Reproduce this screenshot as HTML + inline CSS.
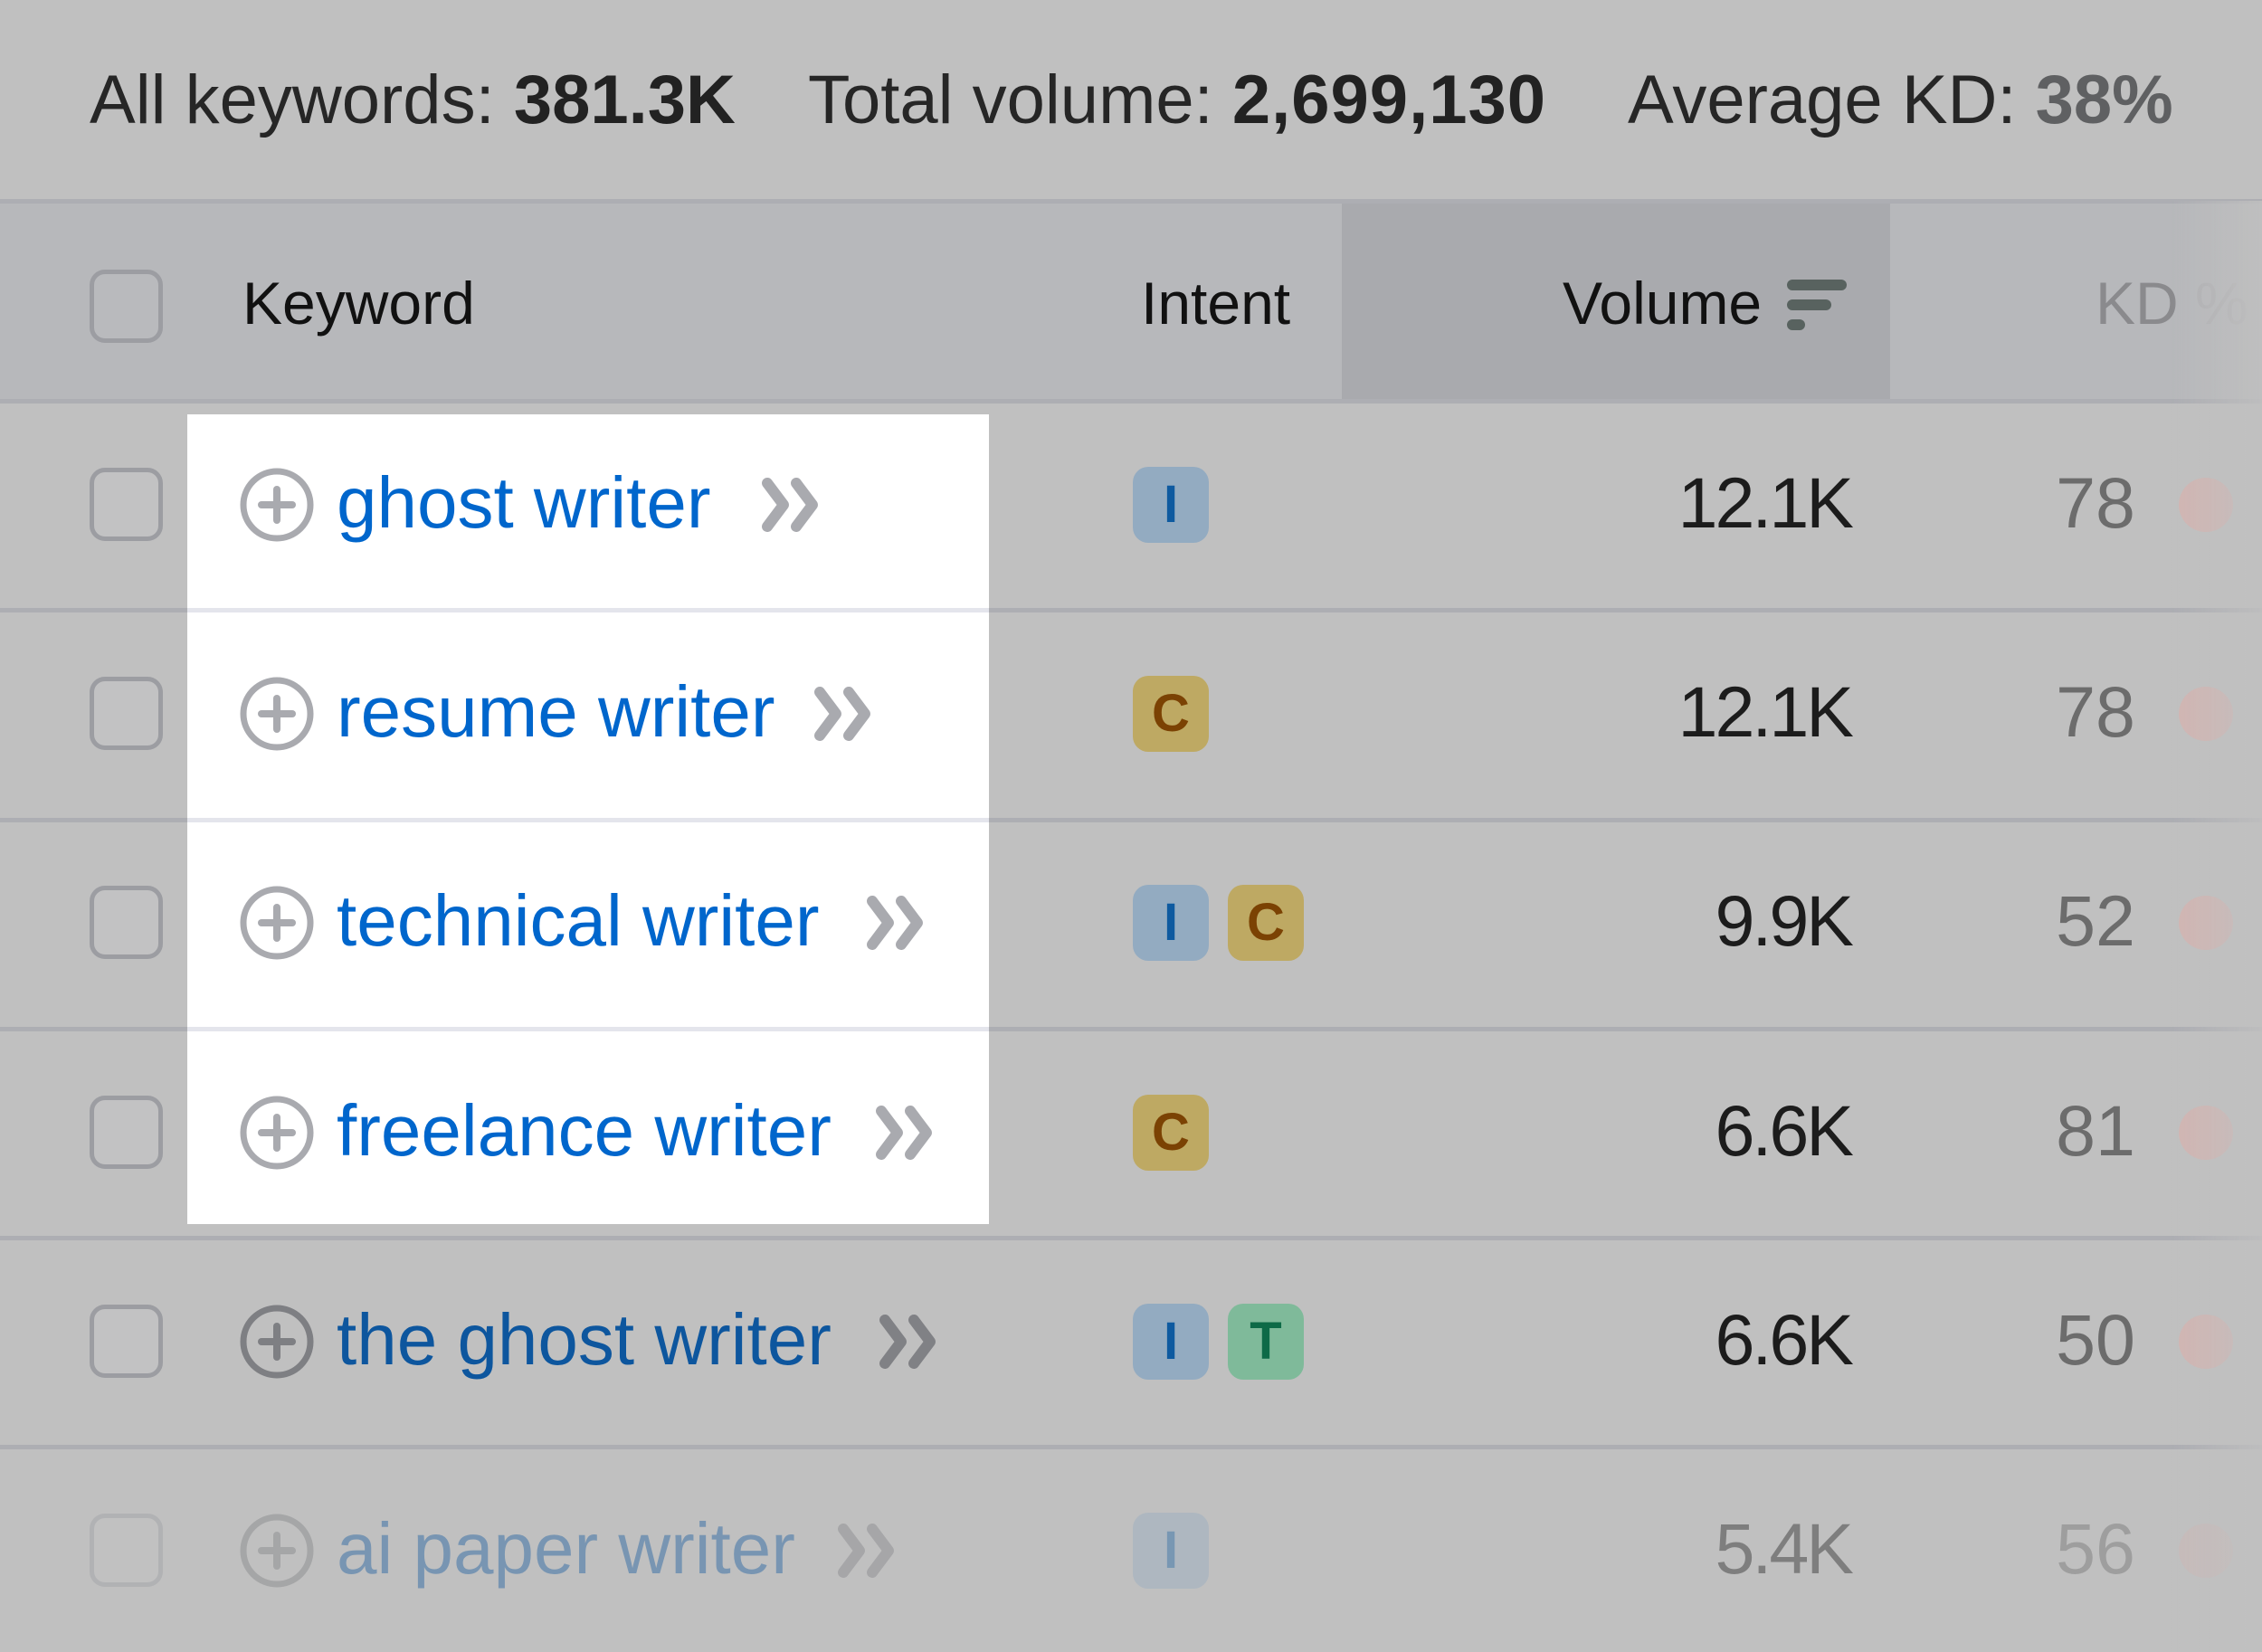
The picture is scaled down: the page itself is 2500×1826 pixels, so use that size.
<!DOCTYPE html>
<html><head><meta charset="utf-8"><style>
*{margin:0;padding:0;box-sizing:border-box}
body{width:2500px;height:1826px;background:#c0c0c0;position:relative;overflow:hidden;font-family:"Liberation Sans",sans-serif}
.a{position:absolute;white-space:nowrap}
.top{font-size:76px;color:#262626;top:66px;line-height:90px}
.top b{color:#222}
.hline{position:absolute;left:0;width:2500px;height:5px;background:#adaeb3}
.cb{position:absolute;left:99px;width:81px;height:81px;border:5px solid #9c9da2;border-radius:17px;background:#c2c2c3}
.kw{font-size:80px;color:#0066cc;line-height:100px}
.badge{position:absolute;width:84px;height:84px;border-radius:17px;font-weight:bold;font-size:58px;text-align:center;line-height:84px}
.bi{background:#93abc1;color:#0e5aa0}
.bc{background:#bea963;color:#7b4203}
.bt{background:#7fba9a;color:#0d6a47}
.num{font-size:79px;color:#1c1c1c;line-height:100px;text-align:right;letter-spacing:-3px;padding-right:3px}
.kd{font-size:79px;color:#6c6c6c;line-height:100px;text-align:right}
.dot{position:absolute;width:60px;height:60px;border-radius:50%;background:#d2b5b2;left:2408px}
</style></head><body>
<div class="a top" style="left:99px">All keywords: <b>381.3K</b></div>
<div class="a top" style="left:893px">Total volume: <b style="letter-spacing:1px">2,699,130</b></div>
<div class="a top" style="left:1799px">Average KD: <b style="color:#5f6062">38%</b></div>

<div class="a" style="left:0;top:222px;width:2500px;height:221px;background:#b7b8bb"></div>
<div class="a" style="left:1483px;top:222px;width:606px;height:221px;background:#a9aaae"></div>
<div class="hline" style="top:220px"></div>
<div class="hline" style="top:441px"></div>
<div class="cb" style="top:298px;background:#b9babd"></div>
<div class="a" style="left:268px;top:285px;font-size:66px;color:#111;line-height:100px">Keyword</div>
<div class="a" style="left:1261px;top:285px;font-size:66px;color:#111;line-height:100px">Intent</div>
<div class="a" style="left:1727px;top:285px;font-size:66px;color:#111;line-height:100px">Volume</div>
<svg class="a" style="left:1975px;top:308px" width="66" height="60"><g stroke="#58625f" stroke-width="12" stroke-linecap="round"><line x1="6" y1="7" x2="60" y2="7"/><line x1="6" y1="29" x2="43" y2="29"/><line x1="6" y1="51" x2="14" y2="51"/></g></svg>
<div class="a" style="left:2316px;top:285px;font-size:66px;color:#8a8a8d;line-height:100px">KD <span style="color:#b0b0b3">%</span></div>

<div class="a" style="left:207px;top:458px;width:886px;height:895px;background:#fff"></div>

<div class="hline" style="top:672px"></div>
<div class="hline" style="top:904px"></div>
<div class="hline" style="top:1135px"></div>
<div class="hline" style="top:1366px"></div>
<div class="hline" style="top:1597px"></div>
<div class="a" style="left:207px;top:672px;width:886px;height:5px;background:#e4e5ec"></div>
<div class="a" style="left:207px;top:904px;width:886px;height:5px;background:#e4e5ec"></div>
<div class="a" style="left:207px;top:1135px;width:886px;height:5px;background:#e4e5ec"></div>

<!-- row1 -->
<div class="cb" style="top:517px"></div>
<svg class="a" style="left:264px;top:516px" width="84" height="84"><circle cx="42" cy="42" r="37" fill="none" stroke="#a9aaaf" stroke-width="7"/><g stroke="#a9aaaf" stroke-width="8" stroke-linecap="round"><line x1="42" y1="25" x2="42" y2="59"/><line x1="25" y1="42" x2="59" y2="42"/></g></svg>
<div class="a kw" style="left:372px;top:506px">ghost writer</div>
<svg class="a" style="left:838px;top:526px" width="76" height="64"><g fill="none" stroke="#a9aaaf" stroke-width="12" stroke-linecap="round" stroke-linejoin="round"><polyline points="10,8 28,32 10,56"/><polyline points="42,8 60,32 42,56"/></g></svg>
<div class="badge bi" style="left:1252px;top:516px">I</div>
<div class="a num" style="right:451px;top:506px">12.1K</div>
<div class="a kd" style="right:140px;top:506px">78</div>
<div class="dot" style="top:528px"></div>

<!-- row2 -->
<div class="cb" style="top:748px"></div>
<svg class="a" style="left:264px;top:747px" width="84" height="84"><circle cx="42" cy="42" r="37" fill="none" stroke="#a9aaaf" stroke-width="7"/><g stroke="#a9aaaf" stroke-width="8" stroke-linecap="round"><line x1="42" y1="25" x2="42" y2="59"/><line x1="25" y1="42" x2="59" y2="42"/></g></svg>
<div class="a kw" style="left:372px;top:737px">resume writer</div>
<svg class="a" style="left:896px;top:757px" width="76" height="64"><g fill="none" stroke="#a9aaaf" stroke-width="12" stroke-linecap="round" stroke-linejoin="round"><polyline points="10,8 28,32 10,56"/><polyline points="42,8 60,32 42,56"/></g></svg>
<div class="badge bc" style="left:1252px;top:747px">C</div>
<div class="a num" style="right:451px;top:737px">12.1K</div>
<div class="a kd" style="right:140px;top:737px">78</div>
<div class="dot" style="top:759px"></div>

<!-- row3 -->
<div class="cb" style="top:979px"></div>
<svg class="a" style="left:264px;top:978px" width="84" height="84"><circle cx="42" cy="42" r="37" fill="none" stroke="#a9aaaf" stroke-width="7"/><g stroke="#a9aaaf" stroke-width="8" stroke-linecap="round"><line x1="42" y1="25" x2="42" y2="59"/><line x1="25" y1="42" x2="59" y2="42"/></g></svg>
<div class="a kw" style="left:372px;top:968px">technical writer</div>
<svg class="a" style="left:954px;top:988px" width="76" height="64"><g fill="none" stroke="#a9aaaf" stroke-width="12" stroke-linecap="round" stroke-linejoin="round"><polyline points="10,8 28,32 10,56"/><polyline points="42,8 60,32 42,56"/></g></svg>
<div class="badge bi" style="left:1252px;top:978px">I</div>
<div class="badge bc" style="left:1357px;top:978px">C</div>
<div class="a num" style="right:451px;top:968px">9.9K</div>
<div class="a kd" style="right:140px;top:968px">52</div>
<div class="dot" style="top:990px"></div>

<!-- row4 -->
<div class="cb" style="top:1211px"></div>
<svg class="a" style="left:264px;top:1210px" width="84" height="84"><circle cx="42" cy="42" r="37" fill="none" stroke="#a9aaaf" stroke-width="7"/><g stroke="#a9aaaf" stroke-width="8" stroke-linecap="round"><line x1="42" y1="25" x2="42" y2="59"/><line x1="25" y1="42" x2="59" y2="42"/></g></svg>
<div class="a kw" style="left:372px;top:1200px">freelance writer</div>
<svg class="a" style="left:964px;top:1220px" width="76" height="64"><g fill="none" stroke="#a9aaaf" stroke-width="12" stroke-linecap="round" stroke-linejoin="round"><polyline points="10,8 28,32 10,56"/><polyline points="42,8 60,32 42,56"/></g></svg>
<div class="badge bc" style="left:1252px;top:1210px">C</div>
<div class="a num" style="right:451px;top:1200px">6.6K</div>
<div class="a kd" style="right:140px;top:1200px">81</div>
<div class="dot" style="top:1222px"></div>

<!-- row5 -->
<div class="cb" style="top:1442px"></div>
<svg class="a" style="left:264px;top:1441px" width="84" height="84"><circle cx="42" cy="42" r="37" fill="none" stroke="#7e7f83" stroke-width="7"/><g stroke="#7e7f83" stroke-width="8" stroke-linecap="round"><line x1="42" y1="25" x2="42" y2="59"/><line x1="25" y1="42" x2="59" y2="42"/></g></svg>
<div class="a kw" style="left:372px;top:1431px;color:#0d569e">the ghost writer</div>
<svg class="a" style="left:968px;top:1451px" width="76" height="64"><g fill="none" stroke="#808185" stroke-width="12" stroke-linecap="round" stroke-linejoin="round"><polyline points="10,8 28,32 10,56"/><polyline points="42,8 60,32 42,56"/></g></svg>
<div class="badge bi" style="left:1252px;top:1441px">I</div>
<div class="badge bt" style="left:1357px;top:1441px">T</div>
<div class="a num" style="right:451px;top:1431px">6.6K</div>
<div class="a kd" style="right:140px;top:1431px">50</div>
<div class="dot" style="top:1453px"></div>

<!-- row6 faded -->
<div style="opacity:.4">
<div class="cb" style="top:1673px"></div>
<svg class="a" style="left:264px;top:1672px" width="84" height="84"><circle cx="42" cy="42" r="37" fill="none" stroke="#7e7f83" stroke-width="7"/><g stroke="#7e7f83" stroke-width="8" stroke-linecap="round"><line x1="42" y1="25" x2="42" y2="59"/><line x1="25" y1="42" x2="59" y2="42"/></g></svg>
<div class="a kw" style="left:372px;top:1662px;color:#0d569e">ai paper writer</div>
<svg class="a" style="left:922px;top:1682px" width="76" height="64"><g fill="none" stroke="#808185" stroke-width="12" stroke-linecap="round" stroke-linejoin="round"><polyline points="10,8 28,32 10,56"/><polyline points="42,8 60,32 42,56"/></g></svg>
<div class="badge bi" style="left:1252px;top:1672px">I</div>
<div class="a num" style="right:451px;top:1662px">5.4K</div>
<div class="a kd" style="right:140px;top:1662px">56</div>
<div class="dot" style="top:1684px"></div>
</div>

<div class="a" style="left:2400px;top:222px;width:100px;height:1604px;background:linear-gradient(to right,rgba(192,192,192,0),rgba(192,192,192,.85))"></div>
</body></html>
